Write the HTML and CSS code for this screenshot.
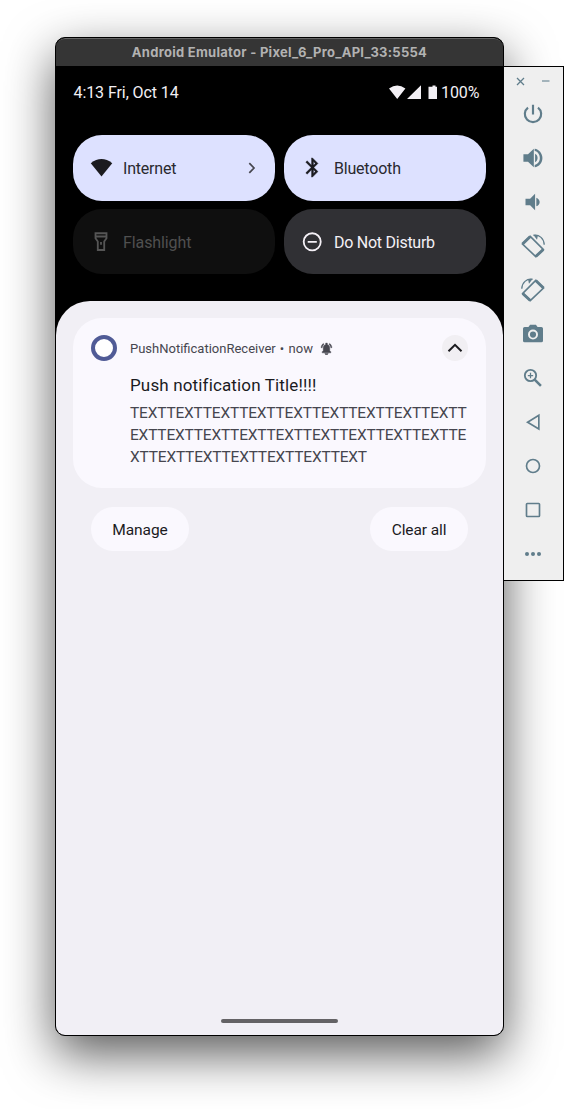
FILE: index.html
```
<!DOCTYPE html>
<html lang="en">
<head>
<meta charset="utf-8">
<title>Android Emulator</title>
<link rel="stylesheet" href="styles.css">
</head>
<body>
<div class="desktop">
  <main class="phone">
    <header class="titlebar"><span>Android Emulator - Pixel_6_Pro_API_33:5554</span></header>
    <div class="screen">
      <div class="status">
        <span class="clock">4:13 Fri, Oct 14</span>
        <svg class="status-icons" width="49" height="15" viewBox="0 0 49 15" fill="#f2eff4"><path d="M0 3.500Q8.200-2.500 16.400 3.500L8.200 14ZM32 14H18L32 0.300ZM42 1.800h1.500V.400h3v1.400H48V14h-8.500V1.800Z"/></svg>
        <span class="percent">100%</span>
      </div>
      <div class="tiles">
        <div class="tile on">
          <svg class="tile-icon" viewBox="0 0 24 24" fill="#1b1b1f"><path d="M.8 7.500Q12-1 23.200 7.500L12 21.500Z"/></svg>
          <span class="t-internet">Internet</span>
          <svg class="chevron" width="8" height="12" viewBox="0 0 8 12" fill="none" stroke="#46464f" stroke-width="1.700"><path d="M1.300 1.200 6 6 1.300 10.800"/></svg>
        </div>
        <div class="tile on">
          <svg class="tile-icon" viewBox="0 0 24 24" fill="#1b1b1f"><path d="M17.710 7.710 12 2h-1v7.590L6.410 5 5 6.410 10.590 12 5 17.590 6.410 19 11 14.410V22h1l5.710-5.710L13.410 12l4.300-4.290zM13 5.830l1.880 1.880L13 9.590V5.830zm1.880 10.460L13 18.170v-3.760l1.880 1.880z" stroke="#1b1b1f" stroke-width=".4"/></svg>
          <span class="t-bluetooth">Bluetooth</span>
        </div>
        <div class="tile off">
          <svg class="tile-icon" viewBox="0 0 24 24" fill="none" stroke="#555" stroke-width="2"><path d="M6 3H18V8.500L15.500 12V21.300H8.500V12L6 8.500ZM6 6.500H18M12 12.500V15.500"/></svg>
          <span class="t-flash">Flashlight</span>
        </div>
        <div class="tile dnd">
          <svg class="tile-icon" viewBox="0 0 24 24" fill="none" stroke="#f4f0f6" stroke-width="1.900"><circle cx="11.700" cy="12.300" r="8.900"/><path d="M7 12.300H16.500"/></svg>
          <span class="t-dnd">Do Not Disturb</span>
        </div>
      </div>
      <section class="shade">
        <article class="card">
          <span class="app-icon"></span>
          <div class="content">
            <div class="meta">
              <span class="app-name">PushNotificationReceiver</span><span class="dot">•</span><span class="now">now</span>
              <svg width="13" height="13" viewBox="0 0 24 24" fill="#46464f"><path d="M7.580 4.080 6.150 2.650C3.750 4.480 2.170 7.300 2.030 10.500h2c.15-2.650 1.510-4.970 3.550-6.420zm12.390 6.420h2c-.15-3.200-1.730-6.020-4.120-7.850l-1.420 1.430c2.020 1.450 3.390 3.770 3.540 6.420zM18 11c0-3.070-1.640-5.640-4.500-6.320V2h-3v2.680C7.630 5.360 6 7.920 6 11v5l-2 2v2h16v-2l-2-2v-5zM9 21h6c0 1.600-1.300 2.500-3 2.500S9 22.600 9 21z" stroke="#46464f" stroke-width=".8"/></svg>
            </div>
            <h1>Push notification Title!!!!</h1>
            <p><span>TEXTTEXTTEXTTEXTTEXTTEXTTEXTTEXTTEXTT</span><br><span>EXTTEXTTEXTTEXTTEXTTEXTTEXTTEXTTEXTTE</span><br><span>XTTEXTTEXTTEXTTEXTTEXTTEXT</span></p>
          </div>
          <span class="collapse"><svg width="16" height="10" viewBox="0 0 16 10" fill="none" stroke="#1b1b1f" stroke-width="2"><path d="M1.500 8.300 8 1.900 14.500 8.300"/></svg></span>
        </article>
        <div class="actions"><span class="button manage">Manage</span><span class="button clear">Clear all</span></div>
        <div class="home-bar"></div>
      </section>
    </div>
  </main>
  <aside class="toolbar">
    <div class="window-controls">
      <svg width="9" height="9" viewBox="0 0 9 9"><path d="M1 1 8 8M8 1 1 8" stroke="#607d8b" stroke-width="1.300"/></svg>
      <svg width="9" height="9" viewBox="0 0 9 9"><path d="M1 4H8.500" stroke="#9aacb5" stroke-width="1.800"/></svg>
    </div>
    <div class="tool"><svg viewBox="0 0 24 24" fill="none" stroke="#607d8b"><path class="line" d="M6 4.300A9.800 9.800 0 1 0 18 4.300M12 .8V12.500" stroke-width="2.600"/></svg></div>
    <div class="tool"><svg viewBox="0 0 24 24"><path d="M.5 7.500v9h5.500l7 6.500V1L6 7.500H.5zm14-.500v10c1.800-.8 3-2.700 3-5s-1.200-4.200-3-5zM14 .8v2.900c3.800.7 6.200 4.200 6.200 8.300S17.800 19.600 14 20.300v2.900c5.200-.7 9.300-5.400 9.300-11.200S19.200 1.500 14 .8z"/></svg></div>
    <div class="tool"><svg viewBox="0 0 24 24"><path d="M3 8v8h5.500l6 6V2l-6 6H3zM16 6.800v10.400c2.300-.8 4-2.800 4-5.200s-1.700-4.400-4-5.200z"/></svg></div>
    <div class="tool"><svg class="rotate" viewBox="0 0 24 24"><g fill="none" stroke="#607d8b"><path class="line" d="M1.500 10 9.300 2.500 22.300 15.500 14.700 22.500Z" stroke-width="1.700"/><path d="M1.500 10 9.300 2.500M14.700 22.500 22.300 15.500" stroke-width="3"/><path class="line" d="M12.500 1.300C18.500.5 23 4.500 23.200 10.800" stroke-width="1.300"/></g><path d="m12.300.7 4.700.4-1 4.600Z"/></svg></div>
    <div class="tool"><svg class="rotate flip" viewBox="0 0 24 24"><g fill="none" stroke="#607d8b"><path class="line" d="M1.500 10 9.300 2.500 22.300 15.500 14.700 22.500Z" stroke-width="1.700"/><path d="M1.500 10 9.300 2.500M14.700 22.500 22.300 15.500" stroke-width="3"/><path class="line" d="M12.500 1.300C18.500.5 23 4.500 23.200 10.800" stroke-width="1.300"/></g><path d="m12.300.7 4.700.4-1 4.600Z"/></svg></div>
    <div class="tool"><svg viewBox="0 0 24 24"><path fill-rule="evenodd" d="M8.500 1 6.500 3.500H2Q0 3.500 0 5.500V20Q0 22 2 22H22Q24 22 24 20V5.500Q24 3.500 22 3.500H17.500L15.500 1ZM12 6.700a6 6 0 1 0 0 12 6 6 0 0 0 0-12Zm0 2.300a3.700 3.700 0 1 1 0 7.400 3.700 3.700 0 0 1 0-7.400Z"/></svg></div>
    <div class="tool"><svg viewBox="0 0 24 24" fill="none" stroke="#607d8b"><circle class="line" cx="9" cy="9" r="6.800" stroke-width="2.200"/><path d="M14 14 21.500 21.500" stroke-width="3"/><path d="M9 5.800v6.400M5.800 9h6.400" stroke-width="1.500"/></svg></div>
    <div class="tool"><svg viewBox="0 0 24 24"><path class="line" d="M19 4V20.500L5.500 12.200Z" stroke="#607d8b" stroke-width="2"/></svg></div>
    <div class="tool"><svg viewBox="0 0 24 24"><circle class="line" cx="12" cy="12" r="7.800" stroke="#607d8b" stroke-width="2"/></svg></div>
    <div class="tool"><svg viewBox="0 0 24 24"><rect class="line" x="4.200" y="4.200" width="15.600" height="15.600" rx="1" stroke="#607d8b" stroke-width="2"/></svg></div>
    <div class="tool"><svg viewBox="0 0 24 24"><circle cx="4.800" cy="12" r="2.400"/><circle cx="12" cy="12" r="2.400"/><circle cx="19.200" cy="12" r="2.400"/></svg></div>
  </aside>
</div>
</body>
</html>
```
FILE: styles.css
```
* { box-sizing: border-box; }
body { margin: 0; background: #fff; font-family: Roboto, sans-serif; }
svg { display: block; flex: none; }
.desktop { width: 564px; height: 1109px; padding: 37px 0 0 55px; display: flex; align-items: flex-start; overflow: hidden; }
.phone { width: 449px; height: 999px; flex: none; border: 1px solid #000; border-radius: 10px; overflow: hidden; background: #000; box-shadow: 0 18px 50px rgba(0,0,0,.65); display: flex; flex-direction: column; }
.titlebar { height: 28px; flex: none; background: #353535; border-top: 1px solid #666; border-radius: 9px 9px 0 0; color: #b2b2b2; font: bold 13px/26px Inter, sans-serif; text-align: center; white-space: nowrap; }
.titlebar span { letter-spacing: .28px; }
.screen { flex: 1; display: flex; flex-direction: column; }
.status { height: 69px; padding: 17px 24px 0 17.500px; display: flex; align-items: flex-start; color: #f2eff4; font-size: 16px; line-height: 20px; white-space: nowrap; }
.clock { flex: 1; letter-spacing: -.08px; }
.status-icons { margin: 2px 3px 0 0; }
.percent { width: 38px; letter-spacing: -.1px; }
.tiles { height: 166px; padding: 0 17px; display: grid; grid-template-columns: 202px 202px; grid-template-rows: 65.500px 65.500px; gap: 8px 9px; align-content: start; }
.tile { border-radius: 29px; padding: 0 19px 0 17px; display: flex; align-items: center; font-size: 16px; white-space: nowrap; }
.tile > span { flex: 1; margin-left: 10px; padding-top: 1px; letter-spacing: -.2px; }
.tile > .t-flash { letter-spacing: -.1px; }
.tile > .t-dnd { letter-spacing: -.26px; }
.tile > .t-flash, .tile > .t-dnd { padding-top: 2px; }
.tile-icon { width: 23px; height: 23px; }
.on { background: #dde1ff; color: #29292f; }
.off { background: #0f0f0f; color: #505050; }
.off .tile-icon { width: 22px; margin-right: 1px; }
.dnd { background: #303034; color: #f4f0f6; }
.shade { flex: 1; border-radius: 34px 34px 0 0; background: #f1eff5; padding: 17px 17px 0; display: flex; flex-direction: column; }
.card { width: 413px; height: 170px; flex: none; border-radius: 29px; background: #faf8fe; padding: 17px 18px 0; display: flex; align-items: flex-start; }
.app-icon { width: 26px; height: 26px; flex: none; border: 4.500px solid #505b96; border-radius: 50%; background: #fff; }
.content { width: 312px; flex: none; margin-left: 13px; }
.meta { height: 26px; display: flex; align-items: center; font-size: 13px; color: #46464f; white-space: nowrap; }
.dot { margin: 0 4.500px 0 4px; }
.meta svg { margin-left: 7px; }
h1 { margin: 13px 0 6px; font-size: 17px; line-height: 22px; font-weight: 400; letter-spacing: .15px; color: #1b1b1f; white-space: nowrap; }
p { margin: 0; font-size: 15.500px; line-height: 22px; letter-spacing: -.19px; color: #46464f; white-space: nowrap; }
.collapse { width: 26px; height: 26px; flex: none; border-radius: 50%; background: #f1eff3; display: flex; align-items: center; justify-content: center; }
.actions { padding: 19px 18px 0; display: flex; justify-content: space-between; }
.button { width: 98px; height: 44px; border-radius: 22px; background: #faf8fe; color: #1b1b1f; font-size: 15.500px; line-height: 46px; letter-spacing: -.1px; text-align: center; white-space: nowrap; }
.home-bar { width: 117px; height: 4px; border-radius: 2px; background: #646265; margin: auto auto 12px; }
.toolbar { width: 61px; height: 515px; flex: none; margin: 29px 0 0 -1px; border: 1px solid #000; background: #efefef; display: flex; flex-direction: column; position: relative; }
.window-controls { height: 25px; padding: 10px 13px 0 12px; display: flex; justify-content: space-between; }
.tool { height: 44px; flex: none; padding-right: 2px; display: flex; align-items: center; justify-content: center; }
.tool svg { width: 20px; height: 20px; fill: #607d8b; }
.tool .line { fill: none; }
.tool .rotate { width: 24px; height: 24px; }
.flip { transform: scaleX(-1); }
```
